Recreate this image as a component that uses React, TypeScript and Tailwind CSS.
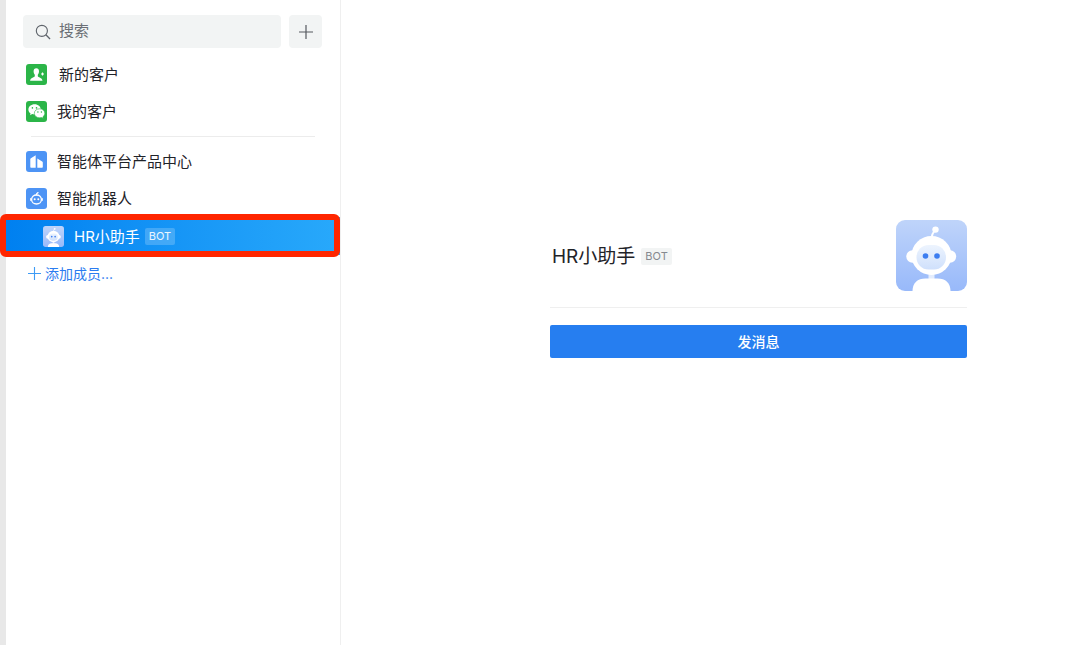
import React, { useId, useState } from 'react';

const ContactIcon = () => (
  <svg viewBox="0 0 21 21" className="mr-[2px] size-[21px] shrink-0" aria-hidden="true">
    <rect width="21" height="21" rx="3" fill="#2bb548" />
    <path
      d="M10.300 4.300c1.700 0 2.700 1.200 2.700 2.900 0 1.600-.5 2.600-1.200 3.500v1.500c0 1 4.500 1.300 4.700 4.500H4.100c.2-3.200 4.700-3.500 4.700-4.500v-1.500c-.7-.9-1.200-1.900-1.200-3.500 0-1.700 1-2.900 2.700-2.900z"
      fill="#fff"
    />
    <path d="M16.500 8.500v3M15 10h3" stroke="#fff" strokeWidth="1.100" />
  </svg>
);

const WechatIcon = () => (
  <svg viewBox="0 0 21 21" className="size-[21px] shrink-0" aria-hidden="true">
    <rect width="21" height="21" rx="3" fill="#2bb548" />
    <path
      d="M8.600 3.200c-3.500 0-6.200 2.300-6.200 5.200 0 1.600.8 3 2.200 4l-.6 1.900 2.200-1.200c.8.200 1.500.3 2.400.3 3.500 0 6.200-2.200 6.200-5s-2.700-5.200-6.200-5.200z"
      fill="#fff"
    />
    <path
      d="M13.600 7.800c-3 0-5.300 2-5.300 4.500s2.300 4.500 5.300 4.500c.7 0 1.300-.1 1.900-.3l1.800 1-.5-1.600c1.200-.9 2-2.100 2-3.600 0-2.500-2.200-4.500-5.200-4.500z"
      fill="#fff"
      stroke="#2bb548"
      strokeWidth=".6"
    />
    <g fill="#2bb548">
      <circle cx="6.400" cy="6.900" r=".8" />
      <circle cx="10.500" cy="6.900" r=".8" />
      <circle cx="11.900" cy="11" r=".7" />
      <circle cx="15.400" cy="11" r=".7" />
    </g>
  </svg>
);

const CompanyIcon = () => (
  <svg viewBox="0 0 21 21" className="size-[21px] shrink-0" aria-hidden="true">
    <rect width="21" height="21" rx="3" fill="#4d94f5" />
    <path d="M4.300 8.400c0-.5.200-.8.600-1.100l4.800-3v12.400H5.300c-.6 0-1-.4-1-1z" fill="#fff" />
    <path d="m11.300 7.600 4.900 2.900c.4.200.6.500.6 1v4.200c0 .6-.4 1-1 1h-4.500z" fill="#fff" />
  </svg>
);

const RobotIcon = () => (
  <svg viewBox="0 0 21 21" className="size-[21px] shrink-0" aria-hidden="true">
    <rect width="21" height="21" rx="3" fill="#4d94f5" />
    <g fill="none" stroke="#fff" strokeWidth="1.300" strokeLinecap="round">
      <ellipse cx="10.500" cy="11.500" rx="4.900" ry="4.500" />
      <path d="M10.300 6.800c.1-1 .7-1.600 1.700-2.200M4.800 10.600v1.700M16.200 10.600v1.700" />
    </g>
    <circle cx="8.700" cy="11.300" r="1" fill="#fff" />
    <circle cx="12.300" cy="11.300" r="1" fill="#fff" />
  </svg>
);

const BotAvatar: React.FC<{ className: string }> = ({ className }) => {
  const id = useId();

  return (
    <svg viewBox="0 0 71 71" className={className} role="img" aria-label="HR小助手">
      <defs>
        <linearGradient id={`${id}bg`} x1="0" y1="0" x2="0" y2="1">
          <stop offset="0" stopColor="#bfd4fa" />
          <stop offset="1" stopColor="#98b9fa" />
        </linearGradient>
        <linearGradient id={`${id}face`} x1="0" y1="0" x2="0" y2="1">
          <stop offset="0" stopColor="#edf4fe" />
          <stop offset="1" stopColor="#cfe0fc" />
        </linearGradient>
      </defs>
      <rect width="71" height="71" rx="9" fill={`url(#${id}bg)`} />
      <path d="M35.500 18c.2-3.500 1.500-5.500 3.500-8" stroke="#fff" strokeWidth="2" fill="none" />
      <circle cx="39.500" cy="9.600" r="3.200" fill="#fff" />
      <rect x="32.500" y="53" width="6" height="7" fill="#e4edfd" />
      <path d="M16.500 71c0-8 5-12.500 13-12.500h12c8 0 13 4.500 13 12.500z" fill="#fff" />
      <circle cx="16.500" cy="36.500" r="6.200" fill="#fff" />
      <circle cx="54" cy="36.500" r="6.200" fill="#fff" />
      <ellipse cx="35.500" cy="35.500" rx="20" ry="19.500" fill="#fff" />
      <rect x="20.500" y="25" width="29.500" height="24.500" rx="12" fill={`url(#${id}face)`} />
      <circle cx="29.500" cy="36" r="2.800" fill="#3c7df0" />
      <circle cx="41" cy="36" r="2.800" fill="#3c7df0" />
    </svg>
  );
};

const PlusIcon: React.FC<{ className: string }> = ({ className }) => (
  <svg viewBox="0 0 14 14" className={className} fill="none" stroke="currentColor" aria-hidden="true">
    <path d="M7 0v14M0 7h14" strokeWidth="1.200" />
  </svg>
);

interface NavRowProps {
  icon: React.ReactNode;
  label: string;
}

const NavRow: React.FC<NavRowProps> = ({ icon, label }) => (
  <li>
    <button type="button" className="flex h-[37px] w-full items-center gap-[10px] pl-5 text-left text-[15px] text-[#1f2329]">
      {icon}
      <span className="pt-[2px]">{label}</span>
    </button>
  </li>
);

const Sidebar = () => {
  const [query, setQuery] = useState('');

  return (
    <aside className="w-[335px] shrink-0 border-r border-[#efefef] pt-[15px]">
      <div className="flex gap-2 pl-[17px] pr-[18px]">
        <label className="flex h-[33px] min-w-0 flex-1 items-center gap-2 rounded bg-[#f2f4f4] pl-3">
          <svg viewBox="0 0 17 17" className="size-4 shrink-0" fill="none" stroke="#5f646b" aria-hidden="true">
            <circle cx="7.300" cy="7.300" r="5.900" strokeWidth="1.200" />
            <path d="m11.500 11.500 4.500 4.500" strokeWidth="1.400" />
          </svg>
          <input
            type="text"
            value={query}
            onChange={(e) => setQuery(e.target.value)}
            placeholder="搜索"
            aria-label="搜索"
            className="min-w-0 flex-1 bg-transparent text-[15px] outline-none placeholder:text-[#6b6f75]"
          />
        </label>
        <button type="button" aria-label="添加" className="flex size-[33px] items-center justify-center rounded bg-[#f2f4f4] text-[#55595f]">
          <PlusIcon className="size-[14px]" />
        </button>
      </div>

      <nav className="pt-2">
        <ul>
          <NavRow icon={<ContactIcon />} label="新的客户" />
          <NavRow icon={<WechatIcon />} label="我的客户" />
        </ul>
        <hr className="mx-[25px] my-[6px] border-[#ececec]" />
        <ul>
          <NavRow icon={<CompanyIcon />} label="智能体平台产品中心" />
          <NavRow icon={<RobotIcon />} label="智能机器人" />
          <li className="relative">
            <button
              type="button"
              aria-current="true"
              className="flex h-[38px] w-full items-center bg-linear-to-r from-[#0080f0] to-[#28a9fb] pl-[37px] text-[15px] text-white"
            >
              <BotAvatar className="size-[21px] shrink-0" />
              <span className="ml-[10px] pt-[2px]">HR小助手</span>
              <span className="ml-[5px] rounded-xs bg-white/20 px-1 text-[11px] leading-[17px] text-white/90">BOT</span>
            </button>
            <span className="pointer-events-none absolute -left-[6px] right-0 -top-[3px] -bottom-[2px] rounded-md border-6 border-[#ff2600]" />
          </li>
        </ul>
        <button type="button" className="flex h-9 items-center gap-1 pl-[22px] text-[14px] text-[#2b7cf0]">
          <PlusIcon className="size-[13px] text-[#3d9bf5]" />
          <span>添加成员...</span>
        </button>
      </nav>
    </aside>
  );
};

const ContactCard = () => (
  <main className="flex min-w-0 flex-1 justify-center pl-[96px] pt-[220px]">
    <section className="w-full max-w-[417px]">
      <header className="flex items-center justify-between border-b border-[#efefef] pb-4">
        <div className="flex items-center gap-[6px] pl-[2px] pt-[2px]">
          <h1 className="text-[19px] leading-7 text-[#1f2329]">HR小助手</h1>
          <span className="rounded-xs bg-[#f2f4f4] px-1 text-[11px] leading-[17px] text-[#85898f]">BOT</span>
        </div>
        <BotAvatar className="size-[71px] shrink-0" />
      </header>
      <button type="button" className="mt-[17px] h-[33px] w-full rounded-xs bg-[#267ef0] text-[14px] font-medium text-white">
        发消息
      </button>
    </section>
  </main>
);

const App = () => (
  <div className="flex min-h-screen border-l-6 border-[#e8e8e8] bg-white font-['Inter','Noto_Sans_CJK_SC',sans-serif]">
    <Sidebar />
    <ContactCard />
  </div>
);

export default App;
